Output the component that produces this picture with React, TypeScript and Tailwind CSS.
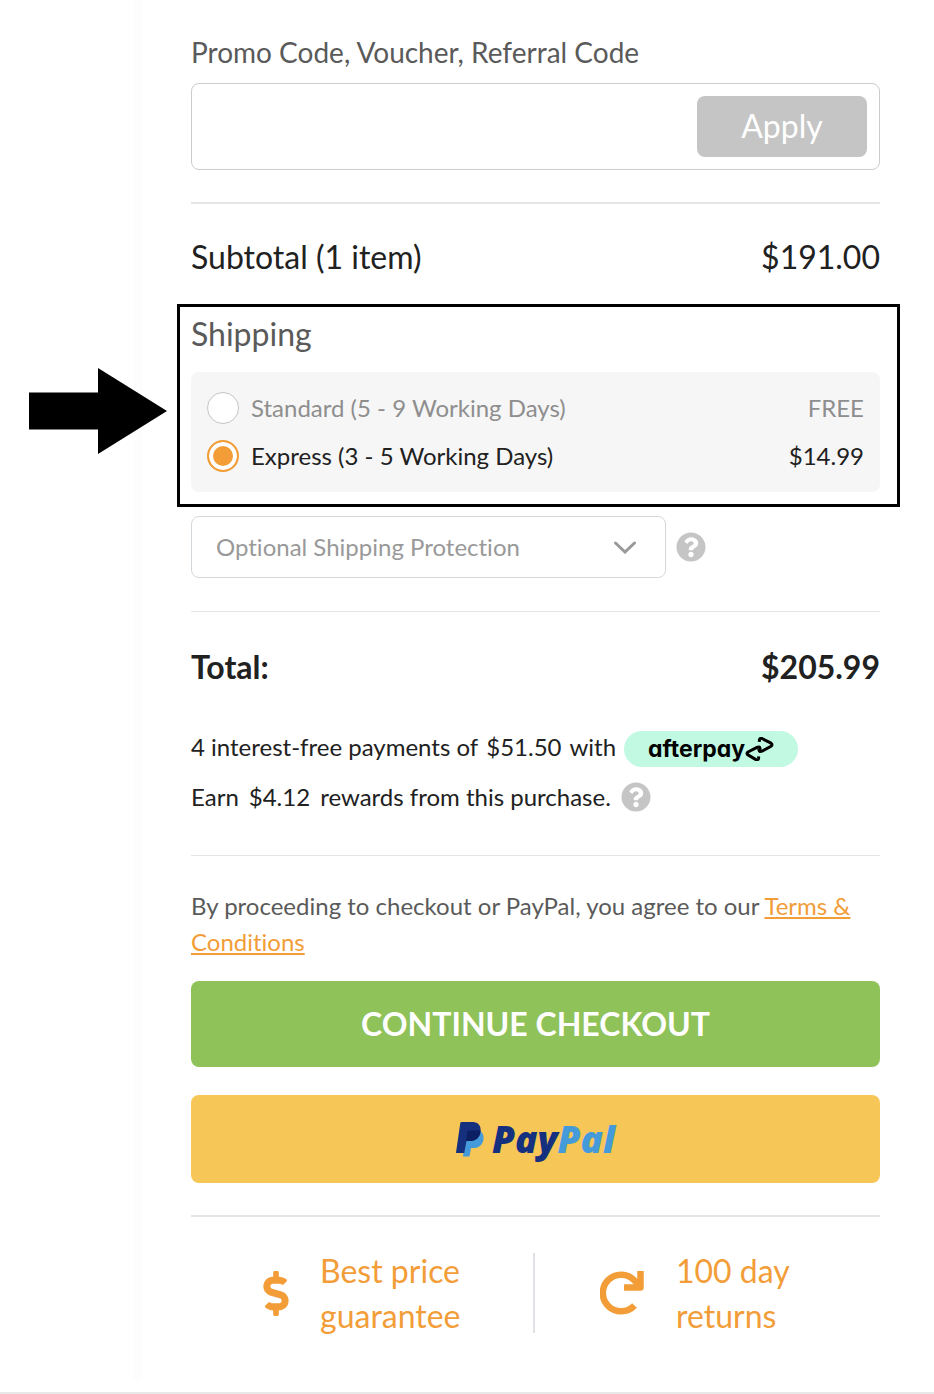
import { useState } from 'react'
import { FaDollarSign, FaQuestionCircle } from 'react-icons/fa'

const shippingOptions = [
  { id: 'standard', label: 'Standard (5 - 9 Working Days)', price: 'FREE' },
  { id: 'express', label: 'Express (3 - 5 Working Days)', price: '$14.99' },
]

function HelpButton({ label }: { label: string }) {
  return (
    <button type="button" aria-label={label} className="shrink-0 text-[#c5c5c5]">
      <FaQuestionCircle className="size-[30px]" />
    </button>
  )
}

function Arrow() {
  return (
    <svg viewBox="0 0 138 86" className="absolute right-full top-[61px] mr-[13px] w-[138px] h-[86px]" aria-hidden="true">
      <path d="M0 24.5H69V0L138 43L69 86V61.5H0Z" fill="#000" />
    </svg>
  )
}

function AfterpayBadge() {
  return (
    <span className="inline-flex h-9 w-[174px] items-center justify-center rounded-full bg-[#c2f9e3] text-black">
      <span className="font-[Inter,sans-serif] text-[23px] leading-8 font-bold [font-feature-settings:'cv11']">afterpay</span>
      <svg viewBox="0 0 29 24" className="h-6 w-[29px]" fill="none" stroke="currentColor" strokeWidth="3" strokeLinejoin="round" aria-hidden="true">
        <path d="M14.3 4.8L14.4 3Q14.7 0.600 17 1.500L26 6.200Q28 7.700 26 9.200L17 14.200Q14.400 15.300 14 13.200L13.700 11.500" />
        <path d="M13.700 19.300L13.600 21.200Q13.300 23.500 11 22.600L3 17.900Q1 16.500 3 15L12 10.300Q14.600 9.200 15 11.200L15.200 13" />
      </svg>
    </span>
  )
}

function PayPalLogo() {
  return (
    <span className="flex items-center gap-2">
      <svg viewBox="0 0 28 35" className="h-[35px] w-7" aria-hidden="true">
        <path d="M9 14L7 34.500H13.500L15 26H18C24 26 28 21 27.500 15C27.300 12 26 10 24 9Z" fill="#459ad9" />
        <path d="M5.500 0H17C22 0 25.500 4 24.500 9.500C23.500 16 19 19 14 19H10.500L8.200 31H0.500Q0 31 0 30.500L4.300 1Q4.500 0 5.500 0Z" fill="#14307f" />
        <path d="M12.500 8.500H24.500C24.500 15 20 19 14 19H10L11.300 9.500Q11.500 8.500 12.500 8.500Z" fill="#0c1f63" />
      </svg>
      <span className="font-['Open_Sans',sans-serif] text-[37px] leading-10 font-extrabold italic text-[#14307f]">
        Pay<span className="text-[#459ad9]">Pal</span>
      </span>
    </span>
  )
}

export default function App() {
  const [code, setCode] = useState('')
  const [shipping, setShipping] = useState('express')

  return (
    <div className="min-h-screen flex flex-col border-b-2 border-[#e8e8e8] bg-white font-[Lato,sans-serif] text-[#212121] [font-variant-ligatures:none]">
      <div className="flex flex-1 pb-3 pl-[133px]">
        <div className="w-[9px] shrink-0 bg-[#fdfdfd]" />
        <main className="flex-1 pt-[34px] pl-[49px] pr-[54px]">
          {/* Promo code */}
          <label htmlFor="promo" className="block text-[28px] leading-9 text-[#5a5a5a]">
            Promo Code, Voucher, Referral Code
          </label>
          <div className="mt-[13px] flex items-center rounded-lg border border-[#cccccc] p-3">
            <input
              id="promo"
              value={code}
              onChange={(e) => setCode(e.target.value)}
              className="min-w-0 flex-1 self-stretch px-3 text-2xl outline-none"
            />
            <button type="button" className="h-[61px] w-[170px] rounded-lg bg-[#c5c5c5] pb-[2px] text-[32px] text-white">
              Apply
            </button>
          </div>

          <div className="mt-8 flex items-center justify-between border-t-2 border-[#e5e5e5] pt-[33px] text-[32px] leading-10">
            <span>Subtotal (1 item)</span>
            <span>$191.00</span>
          </div>

          {/* Shipping */}
          <fieldset className="relative mt-[27px] -ml-[14px] -mr-5 border-3 border-black pt-[7px] pr-[17px] pb-3 pl-[11px]">
            <Arrow />
            <h2 className="text-[32px] leading-10 text-[#5a5a5a]">Shipping</h2>
            <div className="mt-[18px] rounded-lg bg-[#f6f6f6] px-4 py-3">
              {shippingOptions.map((option) => (
                <label
                  key={option.id}
                  className="flex h-12 items-center text-2xl text-[#8e8e8e] has-checked:text-[#212121]"
                >
                  <input
                    type="radio"
                    name="shipping"
                    checked={shipping === option.id}
                    onChange={() => setShipping(option.id)}
                    className="size-8 appearance-none rounded-full border border-[#c5c5c5] bg-white checked:border-2 checked:border-[#f29d38] checked:bg-[#f29d38] checked:shadow-[inset_0_0_0_4px_white]"
                  />
                  <span className="ml-3 flex-1">{option.label}</span>
                  <span>{option.price}</span>
                </label>
              ))}
            </div>
          </fieldset>

          <div className="mt-[9px] flex items-center gap-[10px]">
            <div className="relative w-[475px]">
              <select
                aria-label="Optional Shipping Protection"
                className="h-[62px] w-full appearance-none rounded-lg border border-[#d3d8dd] bg-white px-6 text-2xl text-[#999999]"
              >
                <option>Optional Shipping Protection</option>
              </select>
              <svg viewBox="0 0 24 14" className="pointer-events-none absolute top-6 right-[29px] h-[14px] w-6" fill="none" stroke="#999999" strokeWidth="3" aria-hidden="true">
                <path d="M2.500 3L12 12L21.500 3" strokeLinecap="round" />
              </svg>
            </div>
            <HelpButton label="About shipping protection" />
          </div>

          {/* Total */}
          <div className="mt-[33px] flex items-center justify-between border-t border-[#e5e5e5] pt-[35px] text-[32px] leading-10 font-bold">
            <span>Total:</span>
            <span>$205.99</span>
          </div>

          <div className="mt-11 flex items-start gap-2 text-2xl leading-8">
            <span>4 interest-free payments of</span>
            <span>$51.50</span>
            <span>with</span>
            <AfterpayBadge />
          </div>
          <div className="mt-3 flex items-center gap-[10px] text-2xl leading-9">
            <span>Earn</span>
            <span>$4.12</span>
            <span>rewards from this purchase.</span>
            <HelpButton label="About rewards" />
          </div>

          <p className="mt-10 border-t border-[#e5e5e5] pt-8 text-2xl leading-9 text-[#5a5a5a]">
            By proceeding to checkout or PayPal, you agree to our{' '}
            <a href="#terms" className="text-[#f29d38] underline">
              Terms &amp; Conditions
            </a>
          </p>

          <button type="button" className="mt-[21px] h-[86px] w-full rounded-lg bg-[#8fc258] text-[32px] font-bold text-white">
            CONTINUE CHECKOUT
          </button>
          <button
            type="button"
            className="mt-7 flex h-[88px] w-full items-center justify-center rounded-lg bg-[#f6c656]"
          >
            <PayPalLogo />
          </button>

          {/* Guarantees */}
          <div className="mt-8 flex border-t-2 border-[#e5e5e5] pt-9 text-[32px] leading-[45px] text-[#f29d38]">
            <div className="flex h-20 flex-1 items-center border-r-2 border-[#e1e1e6] pl-[62px]">
              <FaDollarSign className="h-[45px] w-[46px]" />
              <span className="ml-[21px] w-40">Best price guarantee</span>
            </div>
            <div className="flex h-20 flex-1 items-center pl-[65px]">
              <svg viewBox="0 0 44 44" className="size-11" fill="none" stroke="currentColor" strokeWidth="6.500" aria-hidden="true">
                <path d="M34.500 34.500A18.300 18.300 0 1 1 34.500 9.500L40 15" />
                <path d="M40.500 0V16.500H24" strokeLinejoin="round" />
              </svg>
              <span className="ml-8 w-[120px]">100 day returns</span>
            </div>
          </div>
        </main>
      </div>
    </div>
  )
}
